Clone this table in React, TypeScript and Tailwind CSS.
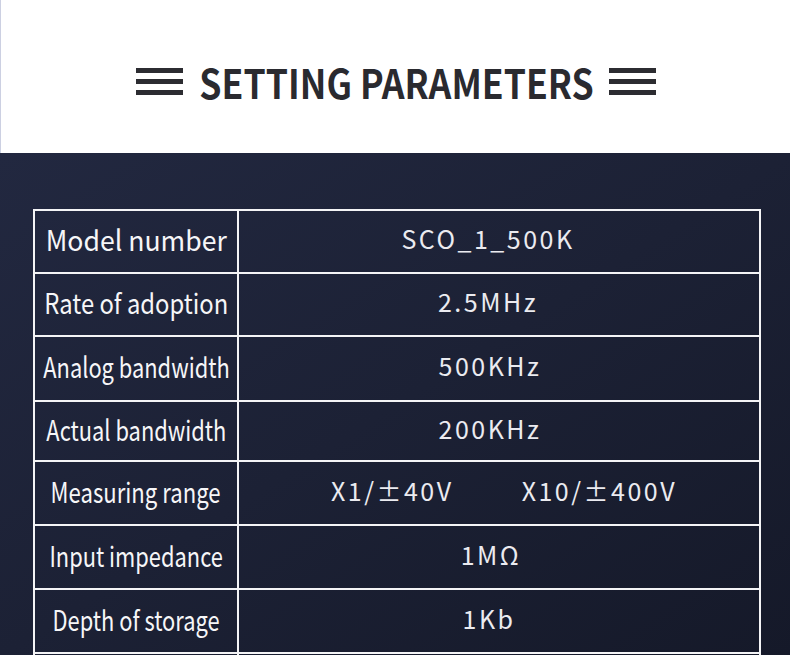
const rows: { label: string; sx: string; value: React.ReactNode; h: string; pad: string }[] = [
  { label: 'Model number', sx: 'scale-x-[0.95]', value: 'SCO_1_500K', h: 'h-[61px]', pad: 'pr-[22px]' },
  { label: 'Rate of adoption', sx: 'scale-x-[0.85]', value: '2.5MHz', h: 'h-[61px]', pad: 'pr-[22px]' },
  { label: 'Analog bandwidth', sx: 'scale-x-[0.78]', value: '500KHz', h: 'h-[63px]', pad: 'pr-[18px]' },
  { label: 'Actual bandwidth', sx: 'scale-x-[0.78]', value: '200KHz', h: 'h-[58px]', pad: 'pr-[18px]' },
  {
    label: 'Measuring range',
    sx: 'scale-x-[0.79]',
    value: (
      <span className="flex gap-[68px]">
        <span>X1/±40V</span>
        <span>X10/±400V</span>
      </span>
    ),
    h: 'h-[62px]',
    pad: 'pl-[10px]',
  },
  { label: 'Input impedance', sx: 'scale-x-[0.78]', value: '1MΩ', h: 'h-[62px]', pad: 'pr-[16px]' },
  { label: 'Depth of storage', sx: 'scale-x-[0.78]', value: '1Kb', h: 'h-[62px]', pad: 'pr-[20px]' },
  { label: '', sx: '', value: '', h: 'h-[62px]', pad: '' },
]

function Bars() {
  return (
    <div className="flex flex-col gap-[6px] w-[47px]">
      <div className="h-[5px] bg-[#2c2c31]" />
      <div className="h-[5px] bg-[#2c2c31]" />
      <div className="h-[5px] bg-[#2c2c31]" />
    </div>
  )
}

export default function App() {
  return (
    <div className="w-[790px] h-[655px] overflow-hidden bg-white" style={{ fontFamily: '"Noto Sans CJK SC", "Noto Sans", sans-serif' }}>
      <div className="h-[153px] border-l border-[#ccd0e2] flex items-center justify-center pt-[10px]">
        <Bars />
        <div className="w-[395px] ml-[17px] mr-[14px] flex justify-center">
          <h1 className="text-[40px] font-bold text-[#2a2a2f] leading-none whitespace-nowrap scale-x-[0.89]">SETTING PARAMETERS</h1>
        </div>
        <Bars />
      </div>

      <div className="h-[502px] bg-gradient-to-br from-[#222840] via-[#1c2135] to-[#151929] pt-[56px] pl-[33px]">
        <div className="w-[728px] border-2 border-b-0 border-[#f4f4f6]">
          {rows.map((r, i) => (
            <div key={i} className="flex border-b-2 border-[#f4f4f6]">
              <div className={`w-[204px] ${r.h} pb-[5px] border-r-2 border-[#f4f4f6] flex items-center justify-center`}>
                <span className={`text-[28px] leading-none text-[#f6f6f8] whitespace-nowrap ${r.sx}`}>{r.label}</span>
              </div>
              <div className={`flex-1 ${r.h} ${r.pad} pb-[5px] flex items-center justify-center text-[25px] text-[#ebebf0] tracking-[2.5px]`}>
                {r.value}
              </div>
            </div>
          ))}
        </div>
      </div>
    </div>
  )
}
